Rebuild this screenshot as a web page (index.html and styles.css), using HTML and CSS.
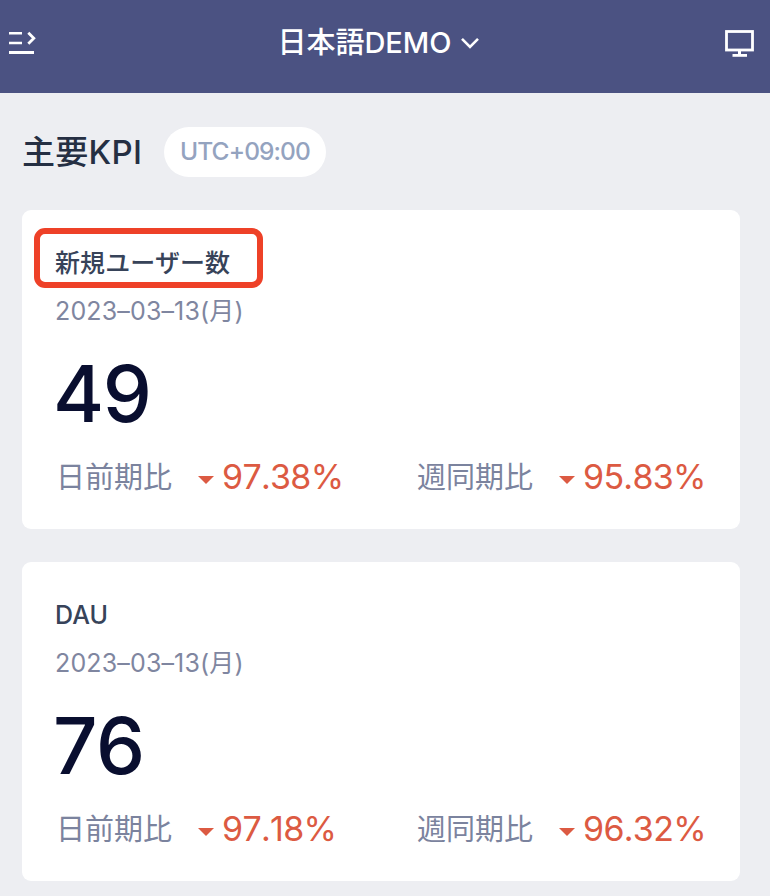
FILE: index.html
```html
<!DOCTYPE html>
<html lang="ja">
    <head>
        <title>日本語DEMO</title>
        <meta charset="UTF-8">
        <meta name="viewport" content="width=device-width, initial-scale=1.0">
        <link rel="stylesheet" href="styles.css">
    </head>
    <body>
        <header class="topbar">
            <svg class="menuIcon" width="28" height="24" viewBox="0 0 28 24" fill="none" stroke="#fff">
                <path d="M0 2.2H13M0 12H13" stroke-width="2.5"/>
                <path d="M0 21.5H25" stroke-width="3"/>
                <path d="M19.3 1.7L24.8 7.2L19.3 12.7" stroke-width="2.8"/>
            </svg>
            <div class="appName">
                <span>日本語DEMO</span>
                <svg width="18" height="12" viewBox="0 0 18 12" fill="none" stroke="#fff" stroke-width="2.6">
                    <path d="M1 1.8L9 9.8L17 1.8"/>
                </svg>
            </div>
            <svg class="screenIcon" width="29" height="27" viewBox="0 0 29 27" fill="none" stroke="#fff">
                <rect x="1.5" y="1.5" width="26" height="18.5" stroke-width="2.8"/>
                <path d="M14.5 20V25" stroke-width="3"/>
                <path d="M7.5 25.4H22" stroke-width="2.8"/>
            </svg>
        </header>
        <main>
            <div class="heading">
                <h1>主要KPI</h1>
                <span class="timezone">UTC+09:00</span>
            </div>
            <section class="card">
                <h2 class="marked">新規ユーザー数</h2>
                <div class="date">2023–03–13(月)</div>
                <div class="value">49</div>
                <div class="compare">
                    <div class="item">
                        <span class="label">日前期比</span>
                        <i class="down"></i>
                        <span class="percent">97.38%</span>
                    </div>
                    <div class="item">
                        <span class="label">週同期比</span>
                        <i class="down"></i>
                        <span class="percent">95.83%</span>
                    </div>
                </div>
            </section>
            <section class="card">
                <h2>DAU</h2>
                <div class="date">2023–03–13(月)</div>
                <div class="value">76</div>
                <div class="compare">
                    <div class="item">
                        <span class="label">日前期比</span>
                        <i class="down"></i>
                        <span class="percent">97.18%</span>
                    </div>
                    <div class="item">
                        <span class="label">週同期比</span>
                        <i class="down"></i>
                        <span class="percent">96.32%</span>
                    </div>
                </div>
            </section>
        </main>
    </body>
</html>
```
FILE: styles.css
```css
* {
    box-sizing: border-box;
}
body {
    margin: 0;
    height: 896px;
    overflow: hidden;
    background-color: #edeef2;
    font-family: Inter, "Noto Sans CJK JP", sans-serif;
}
h1, h2 {
    margin: 0;
    font-weight: 500;
}
svg {
    display: block;
}

.topbar {
    display: grid;
    grid-template-columns: 1fr auto 1fr;
    align-items: center;
    height: 93px;
    padding: 0 16px 7px 9px;
    background-color: #4b5282;
}
.appName {
    display: flex;
    align-items: center;
    gap: 9px;
    padding-right: 7px;
    color: #fff;
    font-size: 29px;
    font-weight: 500;
    line-height: 44px;
}
.screenIcon {
    justify-self: end;
}

main {
    padding: 34px 30px 0 22px;
}
.heading {
    display: flex;
    align-items: center;
    height: 50px;
    margin-bottom: 33px;
}
h1 {
    width: 142px;
    color: #252f43;
    font-size: 33px;
    letter-spacing: 0.3px;
    line-height: 53px;
    white-space: nowrap;
}
.timezone {
    width: 162px;
    height: 50px;
    border-radius: 25px;
    background-color: #fff;
    color: #94a3bf;
    font-size: 24.5px;
    font-weight: 500;
    letter-spacing: -0.9px;
    line-height: 49px;
    text-align: center;
}

.card {
    height: 319px;
    margin-bottom: 33px;
    padding: 34px 33px 0;
    border-radius: 9px;
    background-color: #fff;
}
h2 {
    height: 36px;
    color: #374359;
    font-size: 25px;
    letter-spacing: 0.1px;
    line-height: 38px;
    position: relative;
}
/* red frame laid over the card title */
.marked::after {
    content: "";
    box-sizing: border-box;
    position: absolute;
    left: -21px;
    top: -16px;
    width: 229px;
    height: 60px;
    border: 6px solid #ee4128;
    border-radius: 11px;
}
.date {
    height: 36px;
    margin-top: 12px;
    color: #7f86a0;
    font-size: 25px;
    letter-spacing: 0.15px;
    line-height: 38px;
}
.value {
    height: 90px;
    margin: 21px 0 0 -2px;
    color: #090e2f;
    font-size: 78px;
    font-weight: 500;
    font-kerning: none;
    letter-spacing: -1.5px;
    line-height: 90px;
}
.compare {
    display: flex;
    margin-top: 13px;
    padding-left: 1px;
}
.item {
    display: flex;
    align-items: center;
    width: 361px;
    flex: none;
    height: 48px;
}
.label {
    width: 142px;
    margin-top: -2px;
    color: #7b839e;
    font-size: 29px;
}
.down {
    border: 8.5px solid transparent;
    border-top-color: #dc5a42;
    border-bottom: 0;
    margin-top: 7px;
}
.percent {
    margin-left: 8px;
    color: #dc5a42;
    font-size: 34px;
    font-kerning: none;
    letter-spacing: -0.7px;
}
```
